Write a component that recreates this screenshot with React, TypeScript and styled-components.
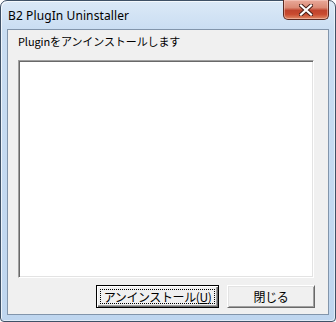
import React from "react";
import styled, { createGlobalStyle } from "styled-components";

const Global = createGlobalStyle`
  html, body { margin: 0; padding: 0; background: #ffffff; }
  #root { width: 336px; height: 322px; }
`;

const Window = styled.div`
  box-sizing: border-box;
  width: 336px;
  height: 322px;
  border: 1px solid #3f5166;
  border-radius: 7px 7px 4px 4px;
  background: linear-gradient(to bottom, #dbe9f7 0px, #c9ddf2 30px, #bfd6ef 100%);
  box-shadow: inset 1px 1px 0 rgba(255,255,255,0.7), inset -1px -1px 0 rgba(255,255,255,0.5);
  padding: 0 6px 6px 6px;
  display: flex;
  flex-direction: column;
`;

const TitleBar = styled.div`
  height: 28px;
  display: flex;
  align-items: flex-start;
  justify-content: space-between;
`;

const Title = styled.div`
  font-family: "Noto Sans", "Liberation Sans", sans-serif;
  font-size: 12px;
  color: #000;
  padding-left: 1px;
  line-height: 14px;
  margin-top: 8px;
  letter-spacing: 0.1px;
`;

const CloseButton = styled.div`
  box-sizing: border-box;
  width: 46px;
  height: 20px;
  margin-top: -1px;
  border: 1px solid #5b2a22;
  border-top: none;
  border-radius: 0 0 5px 5px;
  background: linear-gradient(to bottom, #e9a99a 0%, #db8a75 40%, #c0442d 55%, #c94a2f 75%, #e08a66 100%);
  box-shadow: inset 0 0 0 1px rgba(255,220,210,0.45);
  display: flex;
  align-items: center;
  justify-content: center;
`;

const Client = styled.div`
  box-sizing: border-box;
  flex: 1;
  border: 1px solid #8295ab;
  background: #f0f0f0;
  padding: 5px 14px 6px 10px;
  display: flex;
  flex-direction: column;
  font-family: "Noto Sans CJK JP", "Noto Sans", sans-serif;
  font-size: 12px;
  color: #000;
`;

const Label = styled.div`
  height: 25px;
  line-height: 13px;
  font-size: 11px;
  letter-spacing: -0.1px;
`;

const ListBox = styled.div`
  box-sizing: border-box;
  width: 296px;
  height: 218px;
  background: #fff;
  border: 1px solid;
  border-color: #a0a0a0 #ffffff #ffffff #a0a0a0;
  box-shadow: inset 1px 1px 0 #696969, inset -1px -1px 0 #e3e3e3;
`;

const ButtonRow = styled.div`
  display: flex;
  justify-content: flex-end;
  gap: 8px;
  margin-top: 7px;
  margin-right: -1px;
`;

const Button = styled.div<{ $default?: boolean; $w: number }>`
  box-sizing: border-box;
  width: ${(p) => p.$w}px;
  height: 23px;
  background: #f0f0f0;
  border: 1px solid;
  border-color: ${(p) => (p.$default ? "#000 #000 #000 #000" : "#ffffff #696969 #696969 #ffffff")};
  box-shadow: ${(p) =>
    p.$default
      ? "inset 1px 1px 0 #ffffff, inset -1px -1px 0 #696969, inset -2px -2px 0 #a0a0a0"
      : "inset 1px 1px 0 #e3e3e3, inset -1px -1px 0 #a0a0a0"};
  padding: 3px;
  display: flex;
`;

const Focus = styled.div<{ $show?: boolean }>`
  flex: 1;
  box-sizing: border-box;
  border: 1px dotted ${(p) => (p.$show ? "#000" : "transparent")};
  display: flex;
  align-items: center;
  justify-content: center;
  font-size: 12px;
  line-height: 14px;
  letter-spacing: -0.4px;
`;

const U = styled.span`
  text-decoration: underline;
`;

export default function App() {
  return (
    <>
      <Global />
      <Window>
        <TitleBar>
          <Title>B2 PlugIn Uninstaller</Title>
          <CloseButton>
            <svg width="14" height="12" viewBox="0 0 14 12">
              <path d="M2 1.5 L12 10.5 M12 1.5 L2 10.5" stroke="#4a2018" strokeWidth="4.2" strokeLinecap="square" fill="none" />
              <path d="M2 1.5 L12 10.5 M12 1.5 L2 10.5" stroke="#ffffff" strokeWidth="2.2" strokeLinecap="square" fill="none" />
            </svg>
          </CloseButton>
        </TitleBar>
        <Client>
          <Label>Pluginをアンインストールします</Label>
          <ListBox />
          <ButtonRow>
            <Button $default $w={123}>
              <Focus $show>
                アンインストール(<U>U</U>)
              </Focus>
            </Button>
            <Button $w={88}>
              <Focus>閉じる</Focus>
            </Button>
          </ButtonRow>
        </Client>
      </Window>
    </>
  );
}
